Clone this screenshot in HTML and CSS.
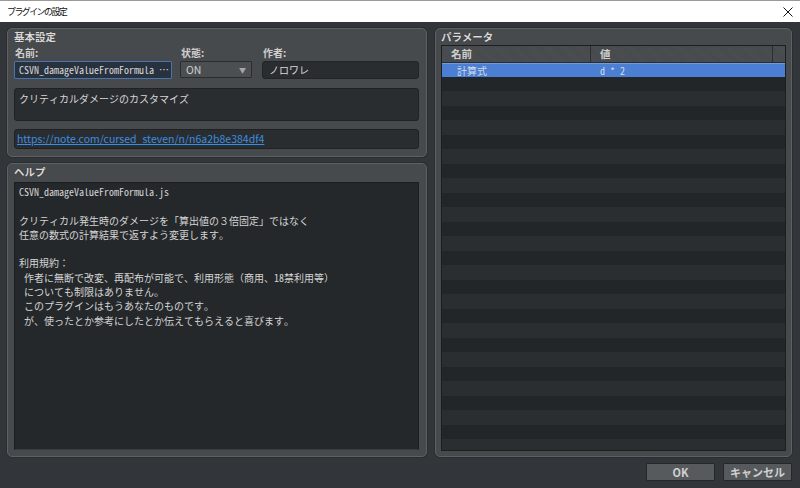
FILE: index.html
```html
<!DOCTYPE html>
<html lang="ja">
<head>
<meta charset="utf-8">
<title>プラグインの設定</title>
<link rel="stylesheet" href="styles.css">
</head>
<body>
<div class="window">
  <div class="titlebar">
    <span class="title">プラグインの設定</span>
    <svg class="close" width="10" height="10" viewBox="0 0 10 10"><path d="M0.5 0.5 L9.5 9.5 M9.5 0.5 L0.5 9.5" stroke="#111" stroke-width="1"/></svg>
  </div>
  <div class="content">
    <div class="left">
      <section class="group basic">
        <div class="group-title">基本設定</div>
        <div class="fields">
          <div class="field f-name">
            <div class="label">名前:</div>
            <div class="input name-input mono">CSVN_damageValueFromFormula …</div>
          </div>
          <div class="field f-state">
            <div class="label">状態:</div>
            <div class="combo"><span>ON</span><span class="arrow">▼</span></div>
          </div>
          <div class="field f-author">
            <div class="label">作者:</div>
            <div class="input author-input mono">ノロワレ</div>
          </div>
        </div>
        <div class="desc mono">クリティカルダメージのカスタマイズ</div>
        <div class="url"><a href="#">https://note.com/cursed_steven/n/n6a2b8e384df4</a></div>
      </section>
      <section class="group help">
        <div class="group-title">ヘルプ</div>
        <div class="help-text mono">CSVN_damageValueFromFormula.js

クリティカル発生時のダメージを「算出値の３倍固定」ではなく
任意の数式の計算結果で返すよう変更します。

利用規約：
 作者に無断で改変、再配布が可能で、利用形態（商用、18禁利用等）
 についても制限はありません。
 このプラグインはもうあなたのものです。
 が、使ったとか参考にしたとか伝えてもらえると喜びます。</div>
      </section>
    </div>
    <section class="group params">
      <div class="group-title">パラメータ</div>
      <div class="table">
        <div class="thead">
          <div class="th col-name">名前</div>
          <div class="th col-value">値</div>
          <div class="th col-spacer"></div>
        </div>
        <div class="tbody">
          <div class="row selected mono">
            <div class="td col-name">計算式</div>
            <div class="td col-value">d * 2</div>
          </div>
          <div class="rows-fill"></div>
        </div>
      </div>
    </section>
  </div>
  <div class="footer">
    <button class="btn">OK</button>
    <button class="btn">キャンセル</button>
  </div>
</div>
</body>
</html>
```

FILE: styles.css
```css
html, body {
  margin: 0;
  padding: 0;
}
body {
  width: 800px;
  height: 488px;
  overflow: hidden;
  background: #32363a;
  font-family: "Noto Sans CJK JP", "Noto Sans", sans-serif;
  color: #d6d6d6;
}
.window {
  width: 800px;
  height: 488px;
  display: flex;
  flex-direction: column;
}
.titlebar {
  height: 21px;
  background: #ffffff;
  border-top: 1px solid #9a9a9a;
  display: flex;
  align-items: center;
  justify-content: space-between;
  padding: 0 8px 0 7px;
  flex: none;
}
.title {
  font-size: 9px;
  letter-spacing: -1.6px;
  color: #111;
}
.close {
  display: block;
  margin-right: -1px;
}
.content {
  flex: 1;
  display: flex;
  gap: 8px;
  padding: 6px 8px 0 7px;
  min-height: 0;
}
.left {
  width: 420px;
  display: flex;
  flex-direction: column;
  gap: 6px;
}
.group {
  background: #474a4d;
  border: 1px solid #5e6164;
  box-shadow: 0 0 0 1px #2b2e31;
  border-radius: 5px;
  box-sizing: border-box;
  display: flex;
  flex-direction: column;
}
.group-title {
  height: 16px;
  line-height: 16px;
  font-size: 10.5px;
  font-weight: bold;
  color: #dadada;
  text-shadow: 0 0 1px #1e1e1e;
  padding-left: 3px;
  flex: none;
}
.mono {
  font-family: "Noto Sans Mono CJK JP", "Noto Sans CJK JP", monospace;
  font-size: 10px;
}
.basic {
  padding: 0 7px 7px 6px;
  height: 129px;
  flex: none;
}
.basic .group-title {
  margin-left: -3px;
}
.fields {
  display: flex;
}
.field {
  display: flex;
  flex-direction: column;
}
.f-name { width: 158px; margin-right: 8px; }
.f-state { width: 72px; margin-right: 10px; }
.f-author { flex: 1; }
.label {
  height: 14px;
  line-height: 14px;
  margin-top: 1px;
  margin-bottom: 1px;
  font-size: 10px;
  font-weight: bold;
  color: #cfcfcf;
  padding-left: 1px;
}
.input {
  height: 18px;
  box-sizing: border-box;
  line-height: 16px;
  padding: 0 4px;
  white-space: nowrap;
  overflow: hidden;
  color: #d8d8d8;
}
.name-input {
  background: #28313e;
  border: 1px solid #4a74ad;
  border-radius: 1px;
}
.author-input {
  background: #2a2d30;
  border: 1px solid #222426;
  border-radius: 3px;
  padding-left: 6px;
}
.combo {
  height: 17px;
  box-sizing: border-box;
  background: #4c4f52;
  border: 1px solid #2a2c2e;
  border-radius: 1px;
  display: flex;
  align-items: center;
  justify-content: space-between;
  padding: 0 5px 0 5px;
  font-size: 10.5px;
  color: #cfcfcf;
}
.arrow {
  font-size: 7px;
  color: #a8a8a8;
}
.desc {
  margin-top: 9px;
  height: 33px;
  box-sizing: border-box;
  background: #2a2d30;
  border: 1px solid #1f2123;
  border-radius: 3px;
  padding: 2px 4px;
  line-height: 16px;
  color: #d6d6d6;
}
.url {
  margin-top: 8px;
  height: 20px;
  box-sizing: border-box;
  background: #2a2d30;
  border: 1px solid #1f2123;
  border-radius: 3px;
  padding: 0 2px;
  line-height: 18px;
  font-size: 10.5px;
  white-space: nowrap;
  overflow: hidden;
}
.url a {
  color: #3a8ee0;
  text-decoration: underline;
}
.help {
  flex: 1;
  padding: 0 7px 6px 6px;
}
.help .group-title {
  margin-left: -3px;
  margin-bottom: 2px;
}
.help-text {
  flex: 1;
  background: #25282b;
  border: 1px solid #1b1d1f;
  border-bottom-color: #3a3d40;
  padding: 2px 4px;
  white-space: pre;
  line-height: 14.3px;
  color: #d4d4d4;
  overflow: hidden;
}
.params {
  flex: 1;
  padding: 0 5px 5px 5px;
}
.params .group-title {
  margin-left: -3px;
}
.table {
  flex: 1;
  display: flex;
  flex-direction: column;
  background: #24272a;
  border: 1px solid #1c1e20;
  overflow: hidden;
}
.thead {
  display: flex;
  height: 16px;
  flex: none;
  background: #4b4e51;
  border-bottom: 1px solid #2a2c2e;
}
.th {
  box-sizing: border-box;
  line-height: 16px;
  font-size: 10.5px;
  font-weight: bold;
  color: #cfcfcf;
  padding-left: 9px;
  border-right: 1px solid #2c2e30;
  background: repeating-linear-gradient(45deg, #4b4e51 0 1px, #474a4d 1px 2px);
}
.th.col-name { width: 149px; }
.th.col-value { width: 182px; }
.th.col-spacer { flex: 1; border-right: none; }
.tbody {
  flex: 1;
  display: flex;
  flex-direction: column;
}
.row {
  display: flex;
  height: 14px;
  line-height: 14px;
  flex: none;
}
.row.selected {
  background: #4a7fd3;
  border-top: 1px solid #6f9be0;
  box-sizing: border-box;
  color: #d3dbea;
}
.td {
  box-sizing: border-box;
}
.td.col-name { width: 149px; padding-left: 15px; }
.td.col-value { padding-left: 9px; }
.rows-fill {
  flex: 1;
  background: repeating-linear-gradient(#232629 0 14.5px, #2b2e31 14.5px 29px);
}
.footer {
  flex: none;
  display: flex;
  justify-content: flex-end;
  gap: 8px;
  padding: 6px 8px 7px 0;
}
.btn {
  width: 69px;
  height: 18px;
  box-sizing: border-box;
  background: #575a5d;
  border: 1px solid #25272a;
  border-radius: 1px;
  color: #d0d0d0;
  font-family: "Noto Sans CJK JP", sans-serif;
  font-size: 11px;
  font-weight: bold;
  line-height: 14px;
  padding: 0;
  margin: 0;
}
```
